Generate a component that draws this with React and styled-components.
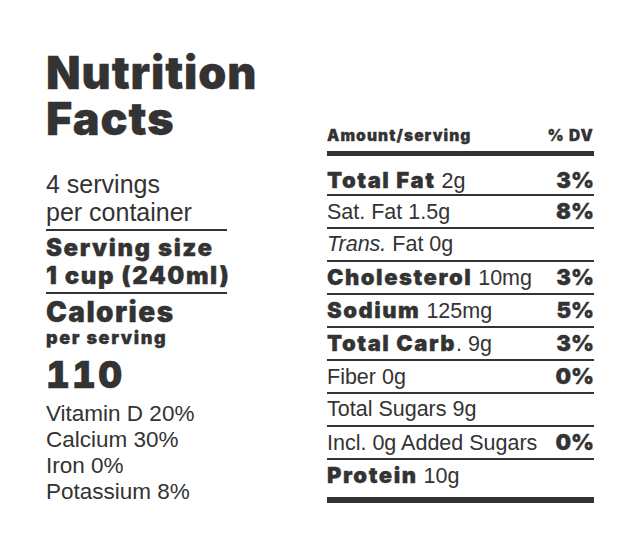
import React from 'react'
import styled, { createGlobalStyle } from 'styled-components'

const GlobalStyle = createGlobalStyle`
  body {
    margin: 0;
    background: #fff;
    color: #333;
    font-family: "Liberation Sans", Arial, sans-serif;
  }
`

const Label = styled.div`
  display: flex;
  align-items: flex-start;
  gap: 100px;
  padding: 50px 0 0 46px;
`

const heavy = `
  font-family: "Inter", "Liberation Sans", sans-serif;
  font-weight: 900;
  -webkit-text-stroke: 0.3px currentColor;
`

const Side = styled.div`
  width: 181px;
`

const Title = styled.h1`
  ${heavy}
  margin: 0 0 28px;
  font-size: 45px;
  line-height: 46px;
  letter-spacing: 0.02em;
`

const Servings = styled.div`
  font-size: 25px;
  line-height: 28px;
  padding-bottom: 3px;
  border-bottom: 2px solid #333;
`

const ServingSize = styled.div`
  ${heavy}
  font-size: 24px;
  line-height: 28px;
  letter-spacing: 0.065em;
  white-space: nowrap;
  padding: 3px 0 2px;
  border-bottom: 2px solid #333;
`

const Calories = styled.div`
  ${heavy}
  font-size: 28px;
  line-height: 32px;
  letter-spacing: 0.05em;
  padding-top: 2px;
`

const PerServing = styled.div`
  ${heavy}
  font-size: 18px;
  line-height: 20px;
  letter-spacing: 0.09em;
`

const CalNumber = styled.div`
  ${heavy}
  font-size: 37px;
  line-height: 46px;
  letter-spacing: 0.06em;
  font-variant-numeric: tabular-nums;
  margin: 4px 0 3px;
`

const Vitamin = styled.div`
  font-size: 22.5px;
  line-height: 26px;
`

const Table = styled.div`
  width: 267px;
  margin-top: 77px;
`

const Head = styled.div`
  ${heavy}
  display: flex;
  justify-content: space-between;
  font-size: 15.5px;
  line-height: 18px;
  letter-spacing: 0.07em;
  padding-bottom: 6px;
  border-bottom: 5px solid #333;
`

const Row = styled.div`
  box-sizing: border-box;
  display: flex;
  justify-content: space-between;
  align-items: baseline;
  height: ${p => (p.first ? 40 : p.last ? 37 : 33)}px;
  font-size: 21.5px;
  line-height: 24px;
  padding-top: ${p => (p.first ? 12 : 3)}px;
  border-bottom: ${p => (p.last ? '0' : '2px solid #333')};
`

const Bold = styled.span`
  ${heavy}
  font-size: 22px;
  letter-spacing: 0.07em;
`

const Pct = styled.span`
  ${heavy}
  font-size: 22px;
`

const EndBar = styled.div`
  height: 6px;
  background: #333;
`

const rows = [
  { name: 'Total Fat', bold: true, amount: ' 2g', dv: '3%' },
  { name: 'Sat. Fat 1.5g', dv: '8%' },
  { name: <><i>Trans.</i> Fat 0g</> },
  { name: 'Cholesterol', bold: true, amount: ' 10mg', dv: '3%' },
  { name: 'Sodium', bold: true, amount: ' 125mg', dv: '5%' },
  { name: 'Total Carb', bold: true, amount: '. 9g', dv: '3%' },
  { name: 'Fiber 0g', dv: '0%' },
  { name: 'Total Sugars 9g' },
  { name: 'Incl. 0g Added Sugars', dv: '0%' },
  { name: 'Protein', bold: true, amount: ' 10g' },
]

export default function App() {
  return (
    <>
      <GlobalStyle />
      <Label>
        <Side>
          <Title>Nutrition<br />Facts</Title>
          <Servings>4 servings<br />per container</Servings>
          <ServingSize>Serving size<br />1 cup (240ml)</ServingSize>
          <Calories>Calories</Calories>
          <PerServing>per serving</PerServing>
          <CalNumber>110</CalNumber>
          <Vitamin>Vitamin D 20%</Vitamin>
          <Vitamin>Calcium 30%</Vitamin>
          <Vitamin>Iron 0%</Vitamin>
          <Vitamin>Potassium 8%</Vitamin>
        </Side>
        <Table>
          <Head>
            <span>Amount/serving</span>
            <span>% DV</span>
          </Head>
          {rows.map((r, i) => (
            <Row key={i} first={i === 0} last={i === rows.length - 1}>
              <span>
                {r.bold ? <Bold>{r.name}</Bold> : r.name}
                {r.amount}
              </span>
              {r.dv && <Pct>{r.dv}</Pct>}
            </Row>
          ))}
          <EndBar />
        </Table>
      </Label>
    </>
  )
}
